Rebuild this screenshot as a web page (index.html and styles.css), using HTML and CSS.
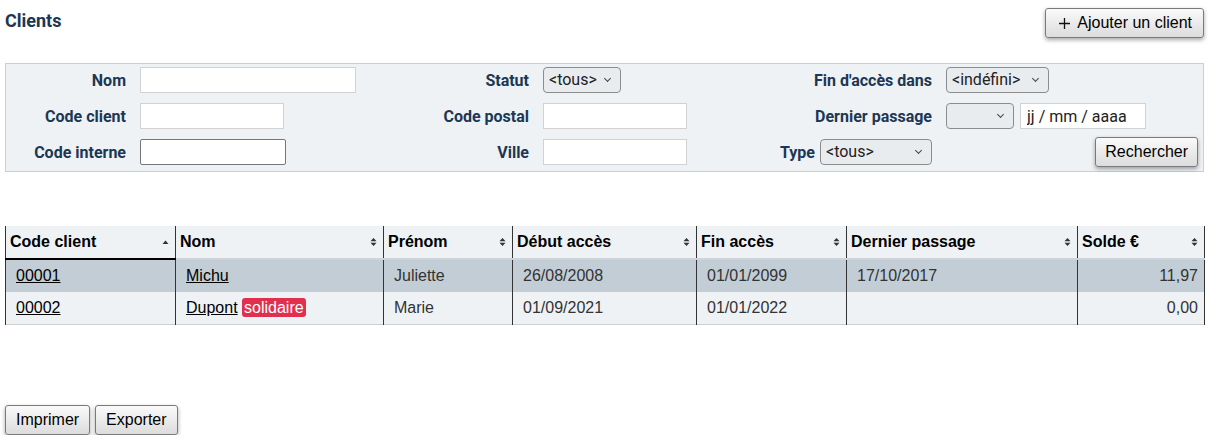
FILE: index.html
```html
<!DOCTYPE html>
<html lang="fr">
<head>
  <meta charset="UTF-8">
  <title>Clients</title>
  <link rel="stylesheet" href="styles.css">
</head>
<body>
  <div class="page">
    <div class="top">
      <h2>Clients</h2>
      <button class="btn add"><svg class="plus" width="11" height="11" viewBox="0 0 11 11"><path d="M5.5 0v11M0 5.5h11"/></svg>Ajouter un client</button>
    </div>

    <form class="search">
      <label class="lbl">Nom</label>
      <div class="fld"><input type="text" class="inp w216"></div>
      <label class="lbl">Statut</label>
      <div class="fld"><span class="sel w78">&lt;tous&gt;</span></div>
      <label class="lbl">Fin d'accès dans</label>
      <div class="fld"><span class="sel w103">&lt;indéfini&gt;</span></div>

      <label class="lbl">Code client</label>
      <div class="fld"><input type="text" class="inp w144"></div>
      <label class="lbl">Code postal</label>
      <div class="fld"><input type="text" class="inp w144"></div>
      <label class="lbl">Dernier passage</label>
      <div class="fld">
        <span class="sel w68"></span>
        <input type="text" class="inp date w126" placeholder="jj / mm / aaaa">
      </div>

      <label class="lbl">Code interne</label>
      <div class="fld"><input type="text" class="inp dark w146"></div>
      <label class="lbl">Ville</label>
      <div class="fld"><input type="text" class="inp w144"></div>
      <div class="lbl">Type <span class="sel w113">&lt;tous&gt;</span></div>
      <div class="fld end"><button type="button" class="btn">Rechercher</button></div>
    </form>

    <table class="list">
      <colgroup>
        <col class="c1"><col class="c2"><col class="c3"><col class="c4"><col class="c5"><col class="c6"><col class="c7">
      </colgroup>
      <thead>
        <tr>
          <th class="sorted">Code client <svg class="arr" width="7" height="10" viewBox="0 0 7 10"><path d="M0.5 7h6L3.5 3.5z"/></svg></th>
          <th>Nom <svg class="arr" width="7" height="10" viewBox="0 0 7 10"><path d="M0.5 4.2h6L3.5 1zM0.5 5.8h6L3.5 9z"/></svg></th>
          <th>Prénom <svg class="arr" width="7" height="10" viewBox="0 0 7 10"><path d="M0.5 4.2h6L3.5 1zM0.5 5.8h6L3.5 9z"/></svg></th>
          <th>Début accès <svg class="arr" width="7" height="10" viewBox="0 0 7 10"><path d="M0.5 4.2h6L3.5 1zM0.5 5.8h6L3.5 9z"/></svg></th>
          <th>Fin accès <svg class="arr" width="7" height="10" viewBox="0 0 7 10"><path d="M0.5 4.2h6L3.5 1zM0.5 5.8h6L3.5 9z"/></svg></th>
          <th>Dernier passage <svg class="arr" width="7" height="10" viewBox="0 0 7 10"><path d="M0.5 4.2h6L3.5 1zM0.5 5.8h6L3.5 9z"/></svg></th>
          <th>Solde € <svg class="arr" width="7" height="10" viewBox="0 0 7 10"><path d="M0.5 4.2h6L3.5 1zM0.5 5.8h6L3.5 9z"/></svg></th>
        </tr>
      </thead>
      <tbody>
        <tr class="odd">
          <td><a href="#">00001</a></td>
          <td><a href="#">Michu</a></td>
          <td>Juliette</td>
          <td>26/08/2008</td>
          <td>01/01/2099</td>
          <td>17/10/2017</td>
          <td class="num">11,97</td>
        </tr>
        <tr>
          <td><a href="#">00002</a></td>
          <td><a href="#">Dupont</a> <span class="tag">solidaire</span></td>
          <td>Marie</td>
          <td>01/09/2021</td>
          <td>01/01/2022</td>
          <td></td>
          <td class="num">0,00</td>
        </tr>
      </tbody>
    </table>

    <div class="actions">
      <button class="btn">Imprimer</button>
      <button class="btn">Exporter</button>
    </div>
  </div>
</body>
</html>
```

FILE: styles.css
```css
body {
  margin: 0;
  padding: 0;
  font-family: Roboto, 'Liberation Sans', sans-serif;
  color: #222;
  background: #fff;
}
.page {
  width: 1199px;
  padding: 8px 0 0 5px;
}
.top {
  display: flex;
  justify-content: space-between;
  align-items: flex-start;
  height: 30px;
  margin-bottom: 25px;
}
.top h2 {
  margin: 2px 0 0 0;
  font-size: 18px;
  font-weight: 700;
  color: #1c3753;
}
.btn {
  font-family: 'Liberation Sans', Arial, sans-serif;
  font-size: 16px;
  color: #000;
  height: 30px;
  padding: 0 9px;
  background: linear-gradient(to bottom, #fafafa, #dcdcdc);
  border: 1px solid #7a7a7a;
  border-radius: 3px;
  box-shadow: 0 2px 4px rgba(0,0,0,0.35);
  cursor: pointer;
}
.btn.add {
  display: flex;
  align-items: center;
  padding: 0 11px 0 13px;
}
.plus {
  stroke: #111;
  stroke-width: 1.3;
  margin-right: 7px;
}

/* search box */
.search {
  display: grid;
  grid-template-columns: 120px 240px 135px 223px 152px 252px;
  grid-template-rows: 30px 30px 30px;
  column-gap: 14px;
  row-gap: 6px;
  align-items: center;
  background: #eef2f5;
  border: 1px solid #c6d0d8;
  padding: 1px 5px 4px 0;
  margin: 0;
}
.lbl {
  text-align: right;
  font-weight: 700;
  font-size: 16px;
  color: #1c3753;
  display: flex;
  justify-content: flex-end;
  align-items: center;
  gap: 5px;
}
.fld {
  display: flex;
  align-items: center;
  gap: 6px;
}
.fld.end {
  justify-content: flex-end;
}
.inp {
  box-sizing: border-box;
  height: 26px;
  border: 1px solid #d2d2d2;
  background: #fff;
  font-family: Roboto, sans-serif;
  font-size: 16px;
  padding: 0 6px;
  margin: 0;
  outline: none;
}
.inp.dark {
  border-color: #767676;
  border-radius: 2px;
}
.inp.date::placeholder {
  color: #222;
}
.sel {
  position: relative;
  box-sizing: border-box;
  display: inline-block;
  height: 26px;
  line-height: 24px;
  border: 1px solid #8c8c8c;
  border-radius: 4px;
  background: #e9ecef;
  font-family: Roboto, sans-serif;
  font-weight: 400;
  font-size: 16px;
  color: #222;
  padding: 0 0 0 5px;
  text-align: left;
}
.sel::after {
  content: "";
  position: absolute;
  right: 10px;
  top: 8px;
  width: 4px;
  height: 4px;
  border-right: 1.3px solid #444;
  border-bottom: 1.3px solid #444;
  transform: rotate(45deg);
}
.w68 { width: 68px; }
.w78 { width: 78px; }
.w103 { width: 103px; }
.w113 { width: 113px; }
.w126 { width: 126px; }
.w144 { width: 144px; }
.w146 { width: 146px; }
.w216 { width: 216px; }

/* table */
.list {
  margin-top: 54px;
  width: 1199px;
  table-layout: fixed;
  border-collapse: collapse;
  font-family: 'Liberation Sans', Arial, sans-serif;
  font-size: 16px;
  border-bottom: 1px solid #cfcfcf;
}
.c1 { width: 170px; }
.c2 { width: 208px; }
.c3 { width: 129px; }
.c4 { width: 184px; }
.c5 { width: 150px; }
.c6 { width: 231px; }
.c7 { width: 127px; }
.list th, .list td {
  border-left: 1px solid #333;
  border-right: 1px solid #333;
}
.list th {
  height: 32px;
  padding: 0 6px 0 4px;
  text-align: left;
  font-weight: 700;
  color: #000;
  background: #eef2f5;
  border-bottom: 2px solid #cdd3d8;
}
.list th.sorted {
  border-bottom-color: #000;
}
.arr {
  float: right;
  margin-top: 4px;
  fill: #333;
}
.list td {
  height: 32px;
  padding: 0 6px 0 10px;
  color: #333;
  background: #eef2f5;
  white-space: nowrap;
}
.list tr.odd td {
  background: #c2cdd5;
}
.list td.num {
  text-align: right;
}
.list a {
  color: #000;
  text-decoration: underline;
}
.tag {
  background: #e0304e;
  color: #fff;
  border-radius: 3px;
  padding: 1px 2px;
}

.actions {
  margin-top: 80px;
  display: flex;
  gap: 5px;
}
.actions .btn {
  padding: 0 10px;
}
```
